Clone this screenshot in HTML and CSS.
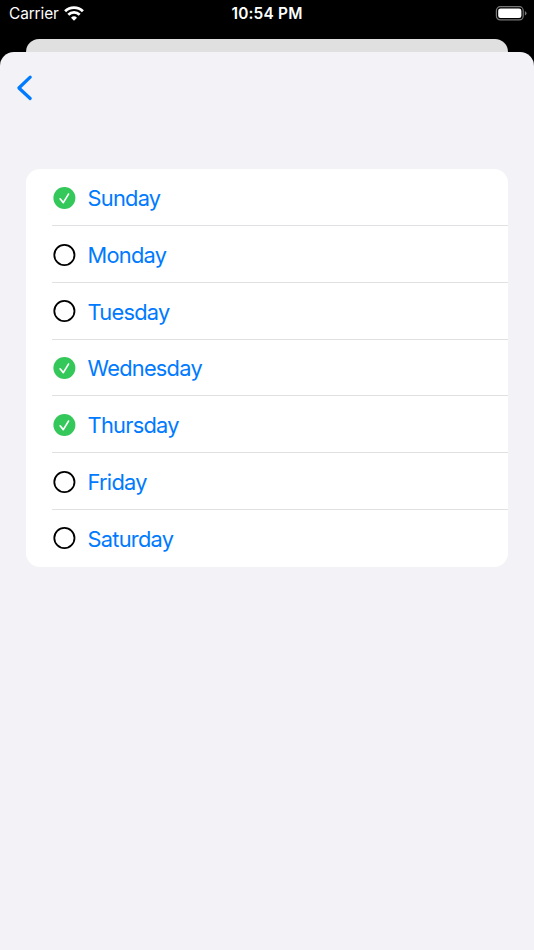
FILE: index.html
```html
<!DOCTYPE html>
<html lang="en"><head><meta charset="utf-8"><title>Days</title><link rel="stylesheet" href="styles.css"></head>
<body>
<header class="status"><div class="carrier"><span class="carrier-name">Carrier</span><svg class="wifi" width="20" height="15" viewBox="0 0 20 15"><g fill="none" stroke="#fff" stroke-width="2.8"><path d="M1.1 5.3a12.6 12.6 0 0 1 17.8 0"/><path d="M4.3 8.7a8.1 8.1 0 0 1 11.4 0"/></g><path d="M7 11.7a4.3 4.3 0 0 1 6 0L10 14.7z" fill="#fff"/></svg></div><time class="clock">10:54 PM</time><svg class="battery" width="32" height="15" viewBox="0 0 32 15"><rect x="1.4" y=".7" width="26.8" height="13.2" rx="3.8" fill="none" stroke="#777" stroke-width="1.2"/><rect x="3.2" y="2.5" width="23.2" height="9.6" rx="2.3" fill="#fff"/><path d="M29.9 5v4.6q1.6-.7 1.6-2.3T29.9 5" fill="#777"/></svg></header>
<div class="back-sheet"></div>
<main class="sheet"><nav class="nav"><svg width="18" height="28" viewBox="0 0 18 28"><path d="M14.2 3.2L2.9 14l11.3 10.5" fill="none" stroke="#007aff" stroke-width="3.2" stroke-linecap="round" stroke-linejoin="round"/></svg></nav>
<ul class="days">
<li class="day"><svg class="mark" viewBox="0 0 24 24"><use href="#on"/></svg><span class="name">Sunday</span></li>
<li class="day"><svg class="mark" viewBox="0 0 24 24"><use href="#off"/></svg><span class="name">Monday</span></li>
<li class="day"><svg class="mark" viewBox="0 0 24 24"><use href="#off"/></svg><span class="name">Tuesday</span></li>
<li class="day"><svg class="mark" viewBox="0 0 24 24"><use href="#on"/></svg><span class="name">Wednesday</span></li>
<li class="day"><svg class="mark" viewBox="0 0 24 24"><use href="#on"/></svg><span class="name">Thursday</span></li>
<li class="day"><svg class="mark" viewBox="0 0 24 24"><use href="#off"/></svg><span class="name">Friday</span></li>
<li class="day"><svg class="mark" viewBox="0 0 24 24"><use href="#off"/></svg><span class="name">Saturday</span></li>
</ul></main>
<svg class="symbols" width="0" height="0"><defs><g id="on"><circle cx="12.4" cy="12" r="11" fill="#34c759"/><path d="M8.1 12.8l3.2 3.8 5.2-8.5" fill="none" stroke="#fff" stroke-width="1.7" stroke-linecap="round" stroke-linejoin="round"/></g><g id="off"><circle cx="12.4" cy="12" r="10.1" fill="none" stroke="#000" stroke-width="1.8"/></g></defs></svg>
</body></html>
```
FILE: styles.css
```css
* { box-sizing: border-box; }
body { margin: 0; height: 950px; background: #000; font-family: Inter, sans-serif; overflow: hidden; display: flex; flex-direction: column; }
.status { height: 39px; flex: none; padding: 0 7px 0 9px; display: grid; grid-template-columns: 1fr auto 1fr; align-items: start; color: #fff; font-size: 15.4px; line-height: 28px; }
.carrier { display: flex; gap: 5px; }
.carrier-name { letter-spacing: -.1px; }
.wifi { margin-top: 5.5px; }
.clock { font-weight: 600; letter-spacing: .2px; margin-left: -2px; }
.battery { justify-self: end; margin-top: 6px; }
.back-sheet { height: 13px; flex: none; margin: 0 26px; background: #e0e0e0; border-radius: 13px 13px 0 0; }
.sheet { flex: 1; background: #f2f2f7; border-radius: 14px 14px 0 0; }
.nav { height: 117.4px; padding: 22px 0 0 16px; }
.nav svg { display: block; }
.days { list-style: none; margin: 0 26px; padding: 0; background: #fff; border-radius: 14px; overflow: hidden; }
.day { height: 56.75px; padding-left: 26px; display: flex; align-items: center; position: relative; color: #007aff; font-size: 21.8px; }
.day:not(:last-child)::after { content: ""; position: absolute; left: 26px; right: 0; bottom: 0; height: 1px; background: #e1e1e3; }
.mark { width: 24px; height: 24px; margin-right: 11.6px; flex: none; overflow: visible; }
.name { letter-spacing: -.75px; line-height: 26px; padding-top: .8px; }
.symbols { position: absolute; }
```
